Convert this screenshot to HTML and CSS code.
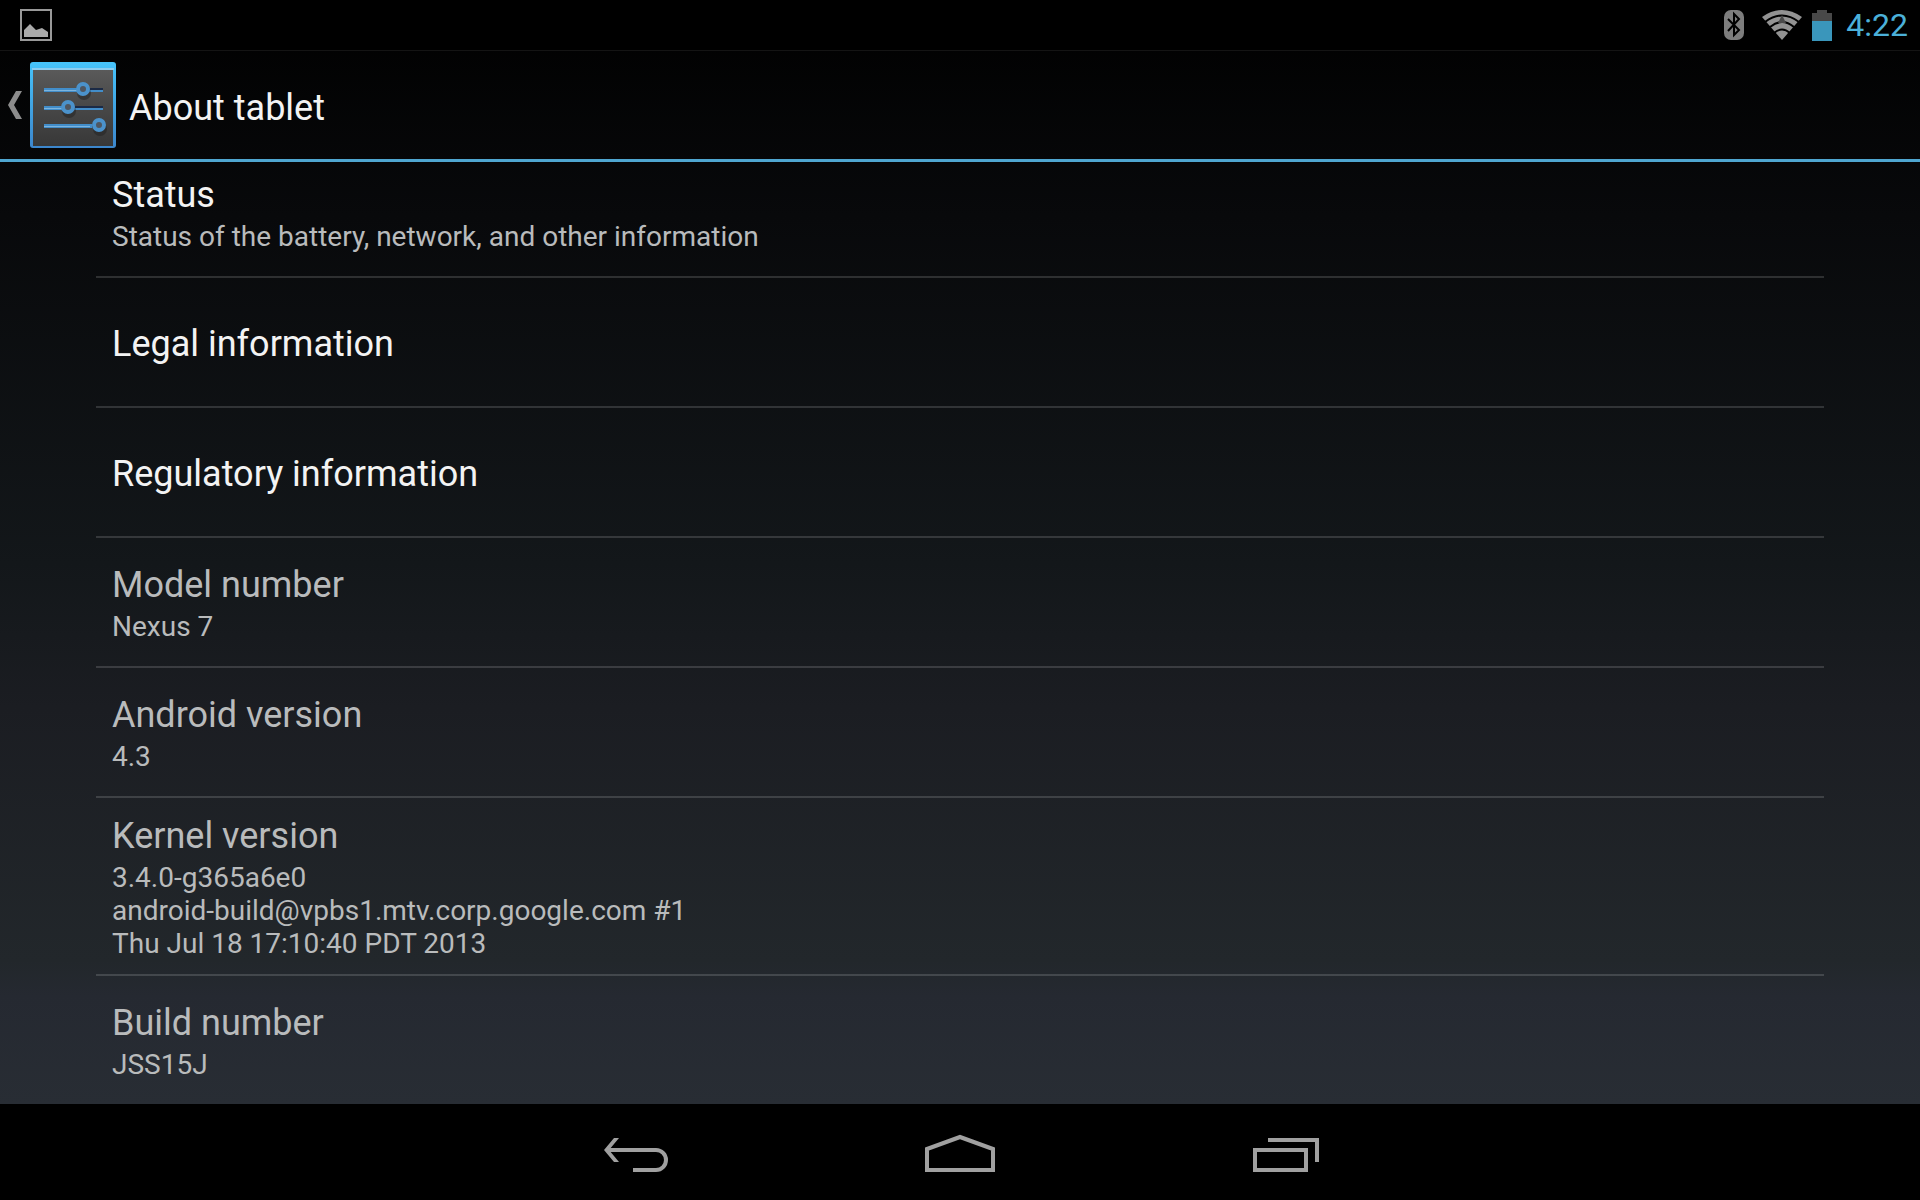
FILE: index.html
```
<!DOCTYPE html>
<html lang="en">
<head>
    <meta charset="UTF-8">
    <meta name="viewport" content="width=device-width, initial-scale=1">
    <title>About tablet</title>
    <link rel="stylesheet" href="styles.css">
</head>
<body>
    <div class="status-bar">
        <svg class="picture-icon" width="32" height="32" viewBox="0 0 32 32" aria-hidden="true">
            <rect x="1" y="1" width="30" height="30" fill="none" stroke="#999" stroke-width="2"/>
            <path d="M4 28V21L10 15L16 21L22 19L28 23V28Z" fill="#aaa"/>
        </svg>
        <div class="status-icons">
            <svg class="bluetooth-icon" width="20" height="30" viewBox="0 0 20 30" aria-hidden="true">
                <rect width="20" height="30" rx="7" fill="#7d7d7d"/>
                <path d="M4 9L15 20L10 25V4L15 9L4 21" fill="none" stroke="#000" stroke-width="2"/>
            </svg>
            <svg class="wifi-icon" width="40" height="30" viewBox="0 0 40 30" aria-hidden="true">
                <path d="M20 30L0 7Q20 -7 40 7Z" fill="#929292"/>
                <path d="M3 12Q20 -1 37 12M8 17Q20 7 32 17M12 23Q20 16 28 23" fill="none" stroke="#000" stroke-width="2"/>
                <path d="M20 5L24 13H16Z" fill="#4a4a4a"/>
            </svg>
            <svg class="battery-icon" width="20" height="31" viewBox="0 0 20 31" aria-hidden="true">
                <path d="M0 3H5V0H15V3H20V12H0Z" fill="#484848"/>
                <rect y="11" width="20" height="20" fill="#3a96bb"/>
            </svg>
            <span class="clock">4:22</span>
        </div>
    </div>

    <header class="action-bar">
        <button class="up-button" aria-label="Navigate up">
            <svg width="14" height="28" viewBox="0 0 14 28" aria-hidden="true">
                <path d="M8 0H14L6 14L14 28H8L0 14Z" fill="#8c8c8c"/>
            </svg>
            <svg class="settings-icon" width="86" height="86" viewBox="0 0 86 86" aria-hidden="true">
                <defs>
                    <linearGradient id="edge" x1="0" y1="0" x2="0" y2="1">
                        <stop offset="0" stop-color="#46c4fb"/>
                        <stop offset="1" stop-color="#3c86cc"/>
                    </linearGradient>
                    <linearGradient id="panel" x1="0" y1="0" x2="0" y2="1">
                        <stop offset="0" stop-color="#5a5a5a"/>
                        <stop offset="0.5" stop-color="#474747"/>
                        <stop offset="1" stop-color="#383838"/>
                    </linearGradient>
                </defs>
                <rect width="86" height="86" rx="3" fill="url(#edge)"/>
                <rect x="2" y="6" width="82" height="2" fill="#8ccdf0"/>
                <rect x="3" y="8" width="80" height="76" fill="url(#panel)"/>
                <g fill="#1b2a45">
                    <rect x="52" y="26" width="21" height="2"/>
                    <rect x="38" y="44" width="35" height="2"/>
                </g>
                <g fill="#428dc9">
                    <rect x="14" y="26" width="38" height="4"/>
                    <rect x="14" y="44" width="23" height="4"/>
                    <rect x="14" y="62" width="48" height="4"/>
                    <rect x="52" y="28" width="21" height="2"/>
                    <rect x="38" y="46" width="35" height="2"/>
                </g>
                <g fill="#7db4dd">
                    <rect x="14" y="28" width="33" height="1"/>
                    <rect x="14" y="46" width="20" height="1"/>
                    <rect x="14" y="64" width="46" height="1"/>
                </g>
                <!-- knob shadows -->
                <g fill="#222" opacity="0.5">
                    <circle cx="54" cy="31" r="7"/>
                    <circle cx="39" cy="49" r="7"/>
                    <circle cx="70" cy="67" r="7"/>
                </g>
                <g fill="#4f5660" stroke="#4b92cb" stroke-width="4">
                    <circle cx="53" cy="27" r="5"/>
                    <circle cx="38" cy="45" r="5"/>
                    <circle cx="69" cy="63" r="5"/>
                </g>
            </svg>
        </button>
        <h1 class="page-title">About tablet</h1>
    </header>

    <main class="content">
        <ul class="preference-list">
            <li>
                <button class="preference">
                    <span class="title">Status</span>
                    <span class="summary">Status of the battery, network, and other information</span>
                </button>
            </li>
            <li>
                <button class="preference">
                    <span class="title">Legal information</span>
                </button>
            </li>
            <li>
                <button class="preference">
                    <span class="title">Regulatory information</span>
                </button>
            </li>
            <li>
                <div class="preference disabled">
                    <span class="title">Model number</span>
                    <span class="summary">Nexus 7</span>
                </div>
            </li>
            <li>
                <div class="preference disabled">
                    <span class="title">Android version</span>
                    <span class="summary">4.3</span>
                </div>
            </li>
            <li>
                <div class="preference disabled">
                    <span class="title">Kernel version</span>
                    <span class="summary">3.4.0-g365a6e0<br>android-build@vpbs1.mtv.corp.google.com #1<br>Thu Jul 18 17:10:40 PDT 2013</span>
                </div>
            </li>
            <li>
                <div class="preference disabled">
                    <span class="title">Build number</span>
                    <span class="summary">JSS15J</span>
                </div>
            </li>
        </ul>
    </main>

    <nav class="nav-bar">
        <button class="nav-button" aria-label="Back">
            <svg width="96" height="96" viewBox="0 0 96 96" aria-hidden="true">
                <path d="M20 46H68A10 10 0 0 1 68 66H45" fill="none" stroke="#a0a0a0" stroke-width="4"/>
                <path d="M26 34H31L21 46L31 58H26L16 46Z" fill="#a0a0a0"/>
            </svg>
        </button>
        <button class="nav-button" aria-label="Home">
            <svg width="96" height="96" viewBox="0 0 96 96" aria-hidden="true">
                <path d="M15 66V45L48 33L81 45V66Z" fill="none" stroke="#a0a0a0" stroke-width="4"/>
            </svg>
        </button>
        <button class="nav-button" aria-label="Recent apps">
            <svg width="96" height="96" viewBox="0 0 96 96" aria-hidden="true">
                <path d="M19 46H70V66H19Z" fill="none" stroke="#a0a0a0" stroke-width="4"/>
                <path d="M32 36H81V58" fill="none" stroke="#a0a0a0" stroke-width="4"/>
            </svg>
        </button>
    </nav>
</body>
</html>
```
FILE: styles.css
```
* {
    box-sizing: border-box;
}
body {
    margin: 0;
    min-height: 100vh;
    display: flex;
    flex-direction: column;
    background: linear-gradient(to bottom, #000 0%, #08090b 18%, #13171a 47%, #1b1d22 59%, #22272b 80%, #252931 83%, #282d34 92%);
    font-family: Roboto, sans-serif;
    color: #f3f3f3;
}
button {
    background: none;
    border: 0;
    padding: 0;
    color: inherit;
    font: inherit;
    text-align: left;
    cursor: pointer;
}
svg {
    display: block;
}

/* status bar */
.status-bar {
    display: flex;
    justify-content: space-between;
    align-items: center;
    height: 51px;
    padding: 0 12px 0 20px;
    background: #000;
    border-bottom: 1px solid #141414;
}
.status-icons {
    display: flex;
    align-items: center;
}
.wifi-icon {
    margin-left: 18px;
}
.battery-icon {
    margin-left: 10px;
}
.clock {
    margin-left: 14px;
    font-size: 32px;
    line-height: 40px;
    color: #4bb0d9;
}

/* action bar */
.action-bar {
    display: flex;
    align-items: center;
    height: 111px;
    border-bottom: 3px solid #4fa6d0;
}
.up-button {
    display: flex;
    align-items: center;
    gap: 8px;
    padding-left: 8px;
}
.page-title {
    margin: 0;
    padding: 6px 0 0 13px;
    font-size: 36px;
    line-height: 42px;
    font-weight: 400;
}

/* preferences */
.content {
    flex: 1;
    padding: 0 5%;
}
.preference-list {
    list-style: none;
    margin: -14px 0 0;
    padding: 0;
}
.preference-list li {
    border-bottom: 2px solid rgba(255, 255, 255, 0.15);
}
.preference-list li:last-child {
    border-bottom: 0;
}
.preference {
    display: flex;
    flex-direction: column;
    justify-content: center;
    gap: 4px;
    width: 100%;
    min-height: 128px;
    padding: 17px 16px 14px;
}
.title {
    font-size: 36px;
    line-height: 42px;
}
.summary {
    font-size: 28px;
    line-height: 33px;
    color: #b9bbbc;
}
.disabled .title {
    color: #b9bbbc;
}

/* navigation bar */
.nav-bar {
    display: flex;
    justify-content: center;
    height: 96px;
    background: #000;
}
.nav-button {
    display: flex;
    justify-content: center;
    align-items: center;
    width: 324px;
}
```
